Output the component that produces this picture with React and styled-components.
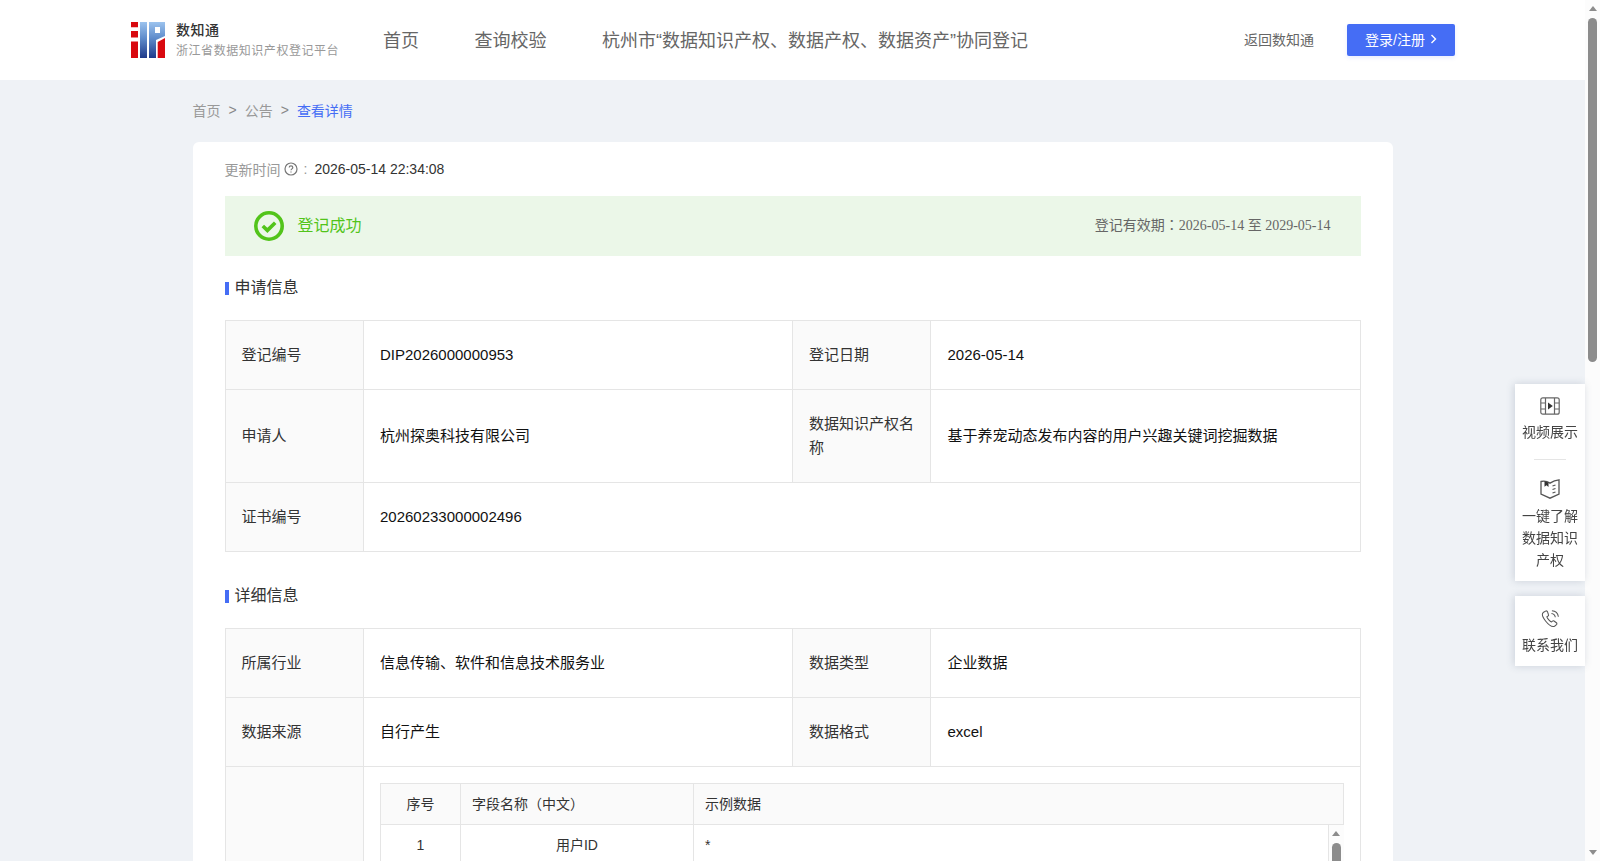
import React from "react";
import styled, { createGlobalStyle } from "styled-components";

const GlobalStyle = createGlobalStyle`
  html, body {
    margin: 0;
    padding: 0;
    height: 100%;
    overflow: hidden;
  }
  body {
    background: #eff2f6;
    font-family: "Liberation Sans", "Noto Sans CJK SC", sans-serif;
    color: #333;
  }
  * {
    box-sizing: border-box;
  }
`;

const LogoMark = () => (
  <svg width="34" height="36" viewBox="0 0 34 36">
    <defs>
      <linearGradient id="blueFade" x1="0" y1="0" x2="0" y2="1">
        <stop offset="0" stopColor="#9cc3ee" />
        <stop offset="0.45" stopColor="#5f8ccb" />
        <stop offset="1" stopColor="#1f3a8a" />
      </linearGradient>
    </defs>
    <path fill="#d9090f" d="M0 0h7v5.300H0zM0 9h7v6.600H0zM0 19.500h7V36H0z" />
    <path fill="url(#blueFade)" d="M9 0h7v36H9z" />
    <path
      fill="url(#blueFade)"
      fillRule="evenodd"
      d="M18 0h16v14l-9 4v18h-7zM24 5v6h5V5z"
    />
    <path fill="#d9090f" d="M26.700 20L34 16v20h-7.300z" />
  </svg>
);

const FilmIcon = () => (
  <svg width="20" height="18" viewBox="0 0 20 18" fill="none" stroke="#666" strokeWidth="1.2">
    <rect x="0.8" y="0.8" width="18.4" height="16.4" rx="2" />
    <path d="M5.500 1v16M14.500 1v16M1 6h4.500M1 12h4.500M14.500 6h4.500M14.500 12h4.500" />
    <path d="M8 5.500l4.800 3.500L8 12.500z" fill="#333" stroke="none" />
  </svg>
);

const BookIcon = () => (
  <svg width="20" height="20" viewBox="0 0 20 20" fill="none" stroke="#555" strokeWidth="1.3">
    <path d="M1 2.500c3-.8 6-.4 9 1.600 2.400-1.600 5.500-3 9-3.300v14.200L10 19.200 1 15.200z" />
    <path d="M4.500 2.300v5.400l2-1.500 2 1.800V3.400z" fill="#333" stroke="none" />
    <path d="M12.500 7l3-1M12.500 10.500l3-1M12.500 14l3-1" />
  </svg>
);

const PhoneIcon = () => (
  <svg width="19" height="19" viewBox="0 0 20 20" fill="none" stroke="#555" strokeWidth="1.100">
    <path d="M4.800 2.200L2.300 3.700C.9 5 1.600 8.500 4.800 12.600c3.400 4.300 7.200 6.600 9.500 5.500l2-1.700c.6-.6.5-1.400-.1-1.900l-2.500-1.900c-.6-.4-1.200-.3-1.700.2l-1 .9c-1.500-.5-4.300-3.600-4.800-5.500l1.100-.7c.6-.4.800-1.100.5-1.700L6.800 2.800c-.4-.8-1.300-1-2-.6z" />
    <path d="M11 4.800c2 .2 3.700 1.700 4.100 3.900M11.500 1.800c3.500.2 6.300 2.800 6.800 6.400" />
  </svg>
);

const CheckBadge = () => (
  <svg width="30" height="30" viewBox="0 0 30 30" fill="none">
    <circle cx="15" cy="15" r="13.200" stroke="#52c41a" strokeWidth="3.600" />
    <path d="M8.800 15l4.600 4.400 7.800-7.600" stroke="#52c41a" strokeWidth="3.600" />
  </svg>
);

const HelpIcon = () => (
  <svg width="14" height="14" viewBox="0 0 14 14" fill="none" stroke="#777" strokeWidth="1.200">
    <circle cx="7" cy="7" r="6" />
    <path d="M5.200 5.600c0-1 .8-1.700 1.800-1.700s1.800.7 1.800 1.600c0 1.300-1.800 1.400-1.800 2.800" />
    <path d="M7 9.400v1.200" />
  </svg>
);

const Chevron = () => (
  <svg width="7" height="10" viewBox="0 0 7 10" fill="none" stroke="#fff" strokeWidth="1.400">
    <path d="M1.500 1l4 4-4 4" />
  </svg>
);

const NAV = ["首页", "查询校验", "杭州市“数据知识产权、数据产权、数据资产”协同登记"];

const SAMPLE_ROWS = [
  ["1", "用户ID", "*"],
  ["2", "用户昵称", "*"],
  ["3", "宠物类型", "猫"],
  ["4", "兴趣关键词", "猫粮"],
  ["5", "发布时间", "2026-01-01"],
  ["6", "内容类型", "图文"],
];

const Scrollbar = ({ $inner, thumb }) => (
  <Rail $inner={$inner}>
    <ArrowUp />
    <Thumb $size={thumb} />
    <ArrowDown />
  </Rail>
);

const App = () => {
  return (
    <Shell>
      <GlobalStyle />
      <Page>
        <Header>
          <Brand>
            <LogoMark />
            <BrandText>
              <BrandName>数知通</BrandName>
              <BrandSub>浙江省数据知识产权登记平台</BrandSub>
            </BrandText>
          </Brand>
          <Nav>
            {NAV.map((item) => (
              <NavItem key={item}>{item}</NavItem>
            ))}
          </Nav>
          <HeaderRight>
            <BackLink>返回数知通</BackLink>
            <LoginButton>
              登录/注册
              <Chevron />
            </LoginButton>
          </HeaderRight>
        </Header>

        <Main>
          <Breadcrumb>
            <span>首页</span>
            <Sep>&gt;</Sep>
            <span>公告</span>
            <Sep>&gt;</Sep>
            <Current>查看详情</Current>
          </Breadcrumb>

          <Card>
            <UpdateRow>
              更新时间
              <HelpIcon />
              <Colon>:</Colon>
              <UpdateValue>2026-05-14 22:34:08</UpdateValue>
            </UpdateRow>

            <StatusBar>
              <StatusLeft>
                <CheckBadge />
                <StatusText>登记成功</StatusText>
              </StatusLeft>
              <Validity>登记有效期：2026-05-14 至 2029-05-14</Validity>
            </StatusBar>

            <SectionTitle>申请信息</SectionTitle>
            <InfoTable>
              <Cols />
              <tbody>
                <tr>
                  <Label>登记编号</Label>
                  <Value>DIP2026000000953</Value>
                  <Label>登记日期</Label>
                  <Value>2026-05-14</Value>
                </tr>
                <tr>
                  <Label>申请人</Label>
                  <Value>杭州探奥科技有限公司</Value>
                  <Label>数据知识产权名称</Label>
                  <Value>基于养宠动态发布内容的用户兴趣关键词挖掘数据</Value>
                </tr>
                <tr>
                  <Label>证书编号</Label>
                  <Value colSpan={3}>20260233000002496</Value>
                </tr>
              </tbody>
            </InfoTable>

            <SectionTitle>详细信息</SectionTitle>
            <InfoTable>
              <Cols />
              <tbody>
                <tr>
                  <Label>所属行业</Label>
                  <Value>信息传输、软件和信息技术服务业</Value>
                  <Label>数据类型</Label>
                  <Value>企业数据</Value>
                </tr>
                <tr>
                  <Label>数据来源</Label>
                  <Value>自行产生</Value>
                  <Label>数据格式</Label>
                  <Value>excel</Value>
                </tr>
                <tr>
                  <Label>数据样例</Label>
                  <SampleCell colSpan={3}>
                    <SampleHead>
                      <HeadNo>序号</HeadNo>
                      <HeadCell>字段名称（中文）</HeadCell>
                      <HeadLast>示例数据</HeadLast>
                    </SampleHead>
                    <SampleScroll>
                      <SampleBody>
                        {SAMPLE_ROWS.map(([no, name, sample]) => (
                          <SampleRow key={no}>
                            <BodyNo>{no}</BodyNo>
                            <BodyName>{name}</BodyName>
                            <BodyValue>{sample}</BodyValue>
                          </SampleRow>
                        ))}
                      </SampleBody>
                      <Scrollbar $inner thumb={120} />
                    </SampleScroll>
                  </SampleCell>
                </tr>
              </tbody>
            </InfoTable>
          </Card>
        </Main>
      </Page>

      <Scrollbar thumb={344} />

      <Float>
        <FloatPanel>
          <FloatItem>
            <FilmIcon />
            <FloatText>视频展示</FloatText>
          </FloatItem>
          <FloatDivider />
          <FloatItem>
            <BookIcon />
            <FloatText>一键了解数据知识产权</FloatText>
          </FloatItem>
        </FloatPanel>
        <FloatPanel>
          <FloatItem>
            <PhoneIcon />
            <FloatText>联系我们</FloatText>
          </FloatItem>
        </FloatPanel>
      </Float>
    </Shell>
  );
};

export default App;

const Cols = () => (
  <colgroup>
    <col style={{ width: "12.2%" }} />
    <col style={{ width: "37.8%" }} />
    <col style={{ width: "12.2%" }} />
    <col style={{ width: "37.8%" }} />
  </colgroup>
);

const Shell = styled.div`
  height: 100vh;
  display: flex;
  overflow: hidden;
`;

const Page = styled.div`
  flex: 1;
  min-width: 0;
  overflow: hidden;
`;

const Rail = styled.div`
  flex: none;
  width: ${(p) => (p.$inner ? "16px" : "15px")};
  padding: 6px 3px;
  background: #fcfcfc;
  border-left: ${(p) => (p.$inner ? "1px solid #e5e5e5" : "0")};
  display: flex;
  flex-direction: column;
  align-items: center;
`;

const ArrowUp = styled.div`
  flex: none;
  width: 0;
  height: 0;
  border-left: 4.5px solid transparent;
  border-right: 4.5px solid transparent;
  border-bottom: 5px solid #8c8c8c;
`;

const ArrowDown = styled.div`
  flex: none;
  width: 0;
  height: 0;
  margin-top: auto;
  border-left: 4.5px solid transparent;
  border-right: 4.5px solid transparent;
  border-top: 5px solid #8c8c8c;
`;

const Thumb = styled.div`
  flex: none;
  width: 9px;
  height: ${(p) => p.$size}px;
  margin-top: 7px;
  border-radius: 5px;
  background: #8c8c8c;
`;

const Header = styled.header`
  height: 80px;
  background: #fff;
  padding: 0 130px 2px 131px;
  display: flex;
  align-items: center;
`;

const Brand = styled.div`
  display: flex;
  align-items: center;
  gap: 11px;
  width: 252px;
  margin-top: 2px;
`;

const BrandText = styled.div`
  display: flex;
  flex-direction: column;
  gap: 3px;
`;

const BrandName = styled.div`
  font-size: 14px;
  line-height: 18px;
  font-weight: 500;
  letter-spacing: 0.5px;
  color: #333;
`;

const BrandSub = styled.div`
  font-size: 12px;
  line-height: 18px;
  letter-spacing: 0.55px;
  color: #999;
  white-space: nowrap;
`;

const Nav = styled.nav`
  display: flex;
  gap: 55.5px;
`;

const NavItem = styled.span`
  font-size: 18px;
  color: #666;
  white-space: nowrap;
`;

const HeaderRight = styled.div`
  margin-left: auto;
  display: flex;
  align-items: center;
  gap: 33px;
`;

const BackLink = styled.span`
  font-size: 14px;
  color: #666;
`;

const LoginButton = styled.button`
  width: 108px;
  height: 32px;
  margin-top: 2px;
  padding: 0 0 2px;
  border: 0;
  border-radius: 2px;
  background: #456df5;
  color: #fff;
  font: inherit;
  font-size: 14px;
  display: flex;
  align-items: center;
  justify-content: center;
  gap: 5px;
  box-shadow: 0 2px 4px rgba(69, 109, 245, 0.12);
`;

const Main = styled.main`
  width: 1200px;
  margin: 0 auto;
  padding-top: 20px;
`;

const Breadcrumb = styled.div`
  display: flex;
  align-items: center;
  gap: 8px;
  height: 20px;
  margin-bottom: 22px;
  font-size: 14px;
  color: #999;
`;

const Sep = styled.span`
  color: #888;
`;

const Current = styled.span`
  color: #456df5;
`;

const Card = styled.section`
  background: #fff;
  border-radius: 6px;
  padding: 16px 32px 40px;
  min-height: 1800px;
`;

const UpdateRow = styled.div`
  display: flex;
  align-items: center;
  gap: 3px;
  height: 22px;
  margin-bottom: 16px;
  font-size: 14px;
  color: #999;
`;

const Colon = styled.span`
  margin: 0 4px 0 3px;
`;

const UpdateValue = styled.span`
  color: #333;
`;

const StatusBar = styled.div`
  height: 60px;
  padding: 0 30px 0 29px;
  background: #ebf7e8;
  display: flex;
  align-items: center;
  justify-content: space-between;
`;

const StatusLeft = styled.div`
  display: flex;
  align-items: center;
  gap: 14px;
`;

const StatusText = styled.span`
  font-size: 16px;
  color: #52c41a;
  padding-bottom: 5px;
`;

const Validity = styled.span`
  font-family: "Liberation Serif", "Noto Sans CJK TC", serif;
  font-size: 14px;
  color: #666;
  padding-bottom: 5px;
`;

const SectionTitle = styled.h3`
  margin: 20px 0;
  height: 24px;
  padding-bottom: 5px;
  display: flex;
  align-items: center;
  font-size: 16px;
  font-weight: 400;
  color: #333;

  &::before {
    content: "";
    width: 4px;
    height: 13px;
    margin: 5px 6px 0 0;
    background: #456df5;
  }

  table + & {
    margin-top: 32px;
  }
`;

const InfoTable = styled.table`
  width: 100%;
  table-layout: fixed;
  border-collapse: collapse;
  font-size: 15px;
  line-height: 24.5px;

  td {
    border: 1px solid #e5e5e5;
    padding: 21.5px 16px;
    height: 69px;
  }
`;

const Label = styled.td`
  background: #fafafa;
  color: #333;
`;

const Value = styled.td`
  color: #111;
`;

const SampleCell = styled.td`
  && {
    padding: 16px;
  }
  font-size: 14px;
  color: #333;
`;

const sampleColumns = `
  display: grid;
  grid-template-columns: 80px 233px 1fr;
`;

const SampleHead = styled.div`
  ${sampleColumns}
  height: 42px;
  background: #fafafa;
  border: 1px solid #e5e5e5;
`;

const HeadCell = styled.div`
  display: flex;
  align-items: center;
  padding: 0 11px;
  border-right: 1px solid #e5e5e5;
`;

const HeadNo = styled(HeadCell)`
  justify-content: center;
`;

const HeadLast = styled(HeadCell)`
  border-right: 0;
`;

const SampleScroll = styled.div`
  height: 240px;
  display: flex;
  border: 1px solid #e5e5e5;
  border-top: 0;
  border-right: 0;
`;

const SampleBody = styled.div`
  flex: 1;
  min-width: 0;
  overflow: hidden;
`;

const SampleRow = styled.div`
  ${sampleColumns}
  height: 41px;
  border-bottom: 1px solid #e5e5e5;
`;

const BodyNo = styled.div`
  display: flex;
  align-items: center;
  justify-content: center;
  border-right: 1px solid #e5e5e5;
`;

const BodyName = styled(BodyNo)``;

const BodyValue = styled.div`
  display: flex;
  align-items: center;
  padding: 0 11px;
`;

const Float = styled.aside`
  position: fixed;
  top: 384px;
  right: 15px;
  width: 70px;
  display: flex;
  flex-direction: column;
  gap: 15px;
`;

const FloatPanel = styled.div`
  background: #fff;
  box-shadow: -1px 0 8px rgba(60, 80, 110, 0.2);
  padding: 13px 7px 10px;
  display: flex;
  flex-direction: column;
  align-items: center;
`;

const FloatItem = styled.div`
  display: flex;
  flex-direction: column;
  align-items: center;
  gap: 6px;
`;

const FloatText = styled.div`
  font-size: 14px;
  line-height: 22px;
  color: #444;
  text-align: center;
`;

const FloatDivider = styled.div`
  width: 32px;
  height: 1px;
  background: #e5e5e5;
  margin: 16px 0 19px;
`;
